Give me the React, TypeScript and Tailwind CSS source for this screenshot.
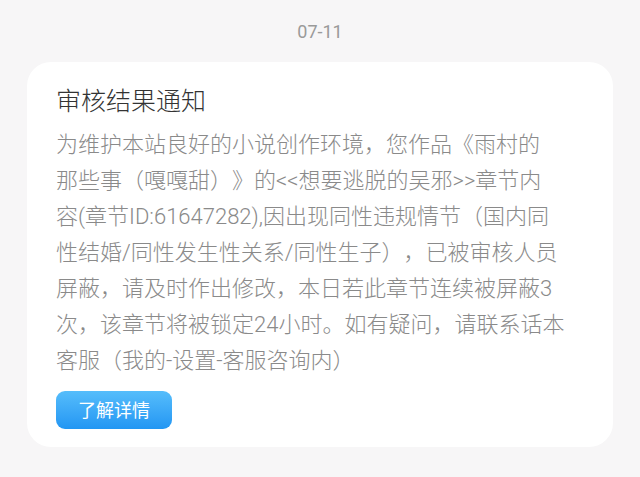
import React from 'react';

const lines = [
  '为维护本站良好的小说创作环境，您作品《雨村的',
  '那些事（嘎嘎甜）》的<<想要逃脱的吴邪>>章节内',
  '容(章节ID:61647282),因出现同性违规情节（国内同',
  '性结婚/同性发生性关系/同性生子），已被审核人员',
  '屏蔽，请及时作出修改，本日若此章节连续被屏蔽3',
  '次，该章节将被锁定24小时。如有疑问，请联系话本',
  '客服（我的-设置-客服咨询内）',
];

export default function App() {
  return (
    <div className="w-[640px] h-[477px] overflow-hidden bg-[#f7f6f7] font-['Roboto','Noto_Sans_CJK_SC',sans-serif] [text-spacing-trim:space-all]">
      <div className="pt-[20px] h-[62px] text-center text-[18px] leading-[24px] text-[#9a9a9a]">07-11</div>

      <div className="mx-[27px] bg-white rounded-[24px] pt-[23px] pb-[18px] px-[29px]">
        <h2 className="text-[25px] leading-[34px] font-light text-[#333333]">审核结果通知</h2>
        <div className="mt-[8px] text-[22px] leading-[36px] font-light text-[#8a8a8a]">
          {lines.map((line, i) => (
            <div key={i} className="whitespace-nowrap">{line}</div>
          ))}
        </div>
        <button className="mt-[12px] w-[116px] h-[38px] rounded-[9px] bg-gradient-to-b from-[#55bdfb] to-[#2196f3] text-white text-[18px] flex items-center justify-center">
          了解详情
        </button>
      </div>
    </div>
  );
}
